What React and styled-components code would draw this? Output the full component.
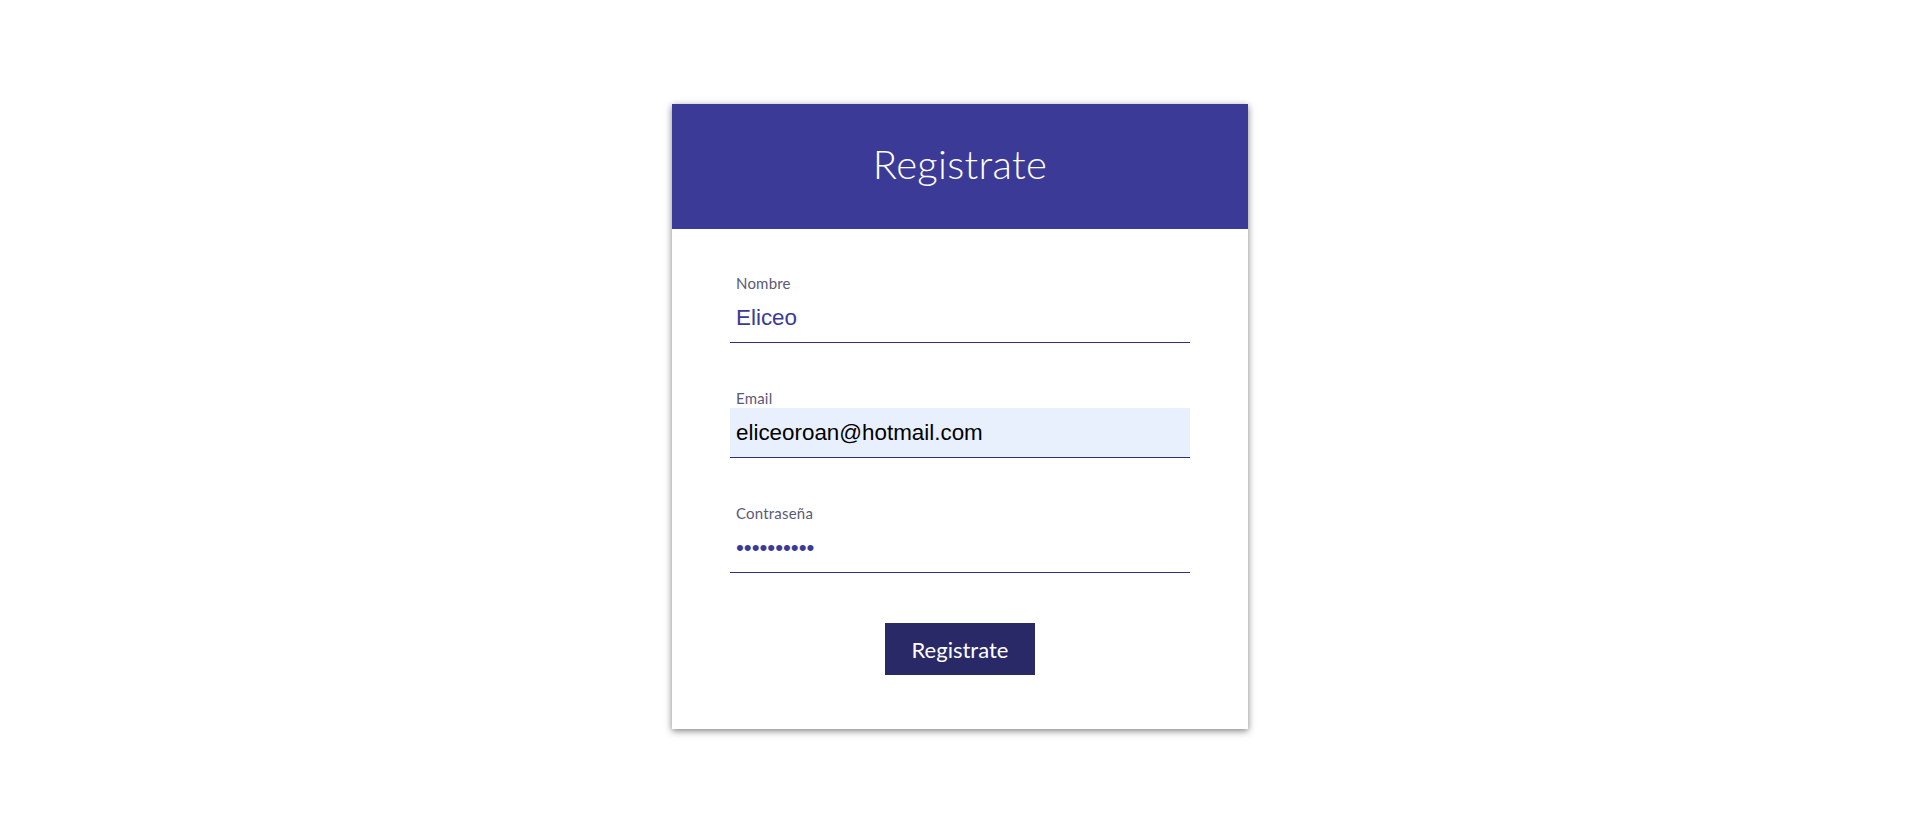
import styled, { createGlobalStyle } from 'styled-components';

const GlobalStyle = createGlobalStyle`
    body {
        margin: 0;
        background: #fff;
        font-family: Lato, "Open Sans", sans-serif;
    }
`;

const Page = styled.main`
    display: flex;
    justify-content: center;
    align-items: flex-start;
    box-sizing: border-box;
    min-height: 100vh;
    padding: 104px 0 40px;
`;

const Card = styled.section`
    width: 576px;
    background: #fff;
    box-shadow: 0 2px 7px rgba(0, 0, 0, 0.5);
`;

const CardHeader = styled.header`
    height: 125px;
    box-sizing: border-box;
    padding-bottom: 5px;
    background: #3b3b97;
    display: flex;
    align-items: center;
    justify-content: center;
`;

const CardTitle = styled.h1`
    margin: 0;
    color: #fff;
    font-family: Lato, sans-serif;
    font-weight: 300;
    font-size: 40px;
    letter-spacing: 0.3px;
`;

const Form = styled.form`
    display: flex;
    flex-direction: column;
    padding: 45px 58px 54px;
`;

const Field = styled.div`
    display: flex;
    flex-direction: column;
    margin-bottom: 46px;

    &:last-of-type {
        margin-bottom: 50px;
    }
`;

const Label = styled.label`
    padding-left: 6px;
    margin-bottom: 1px;
    color: #5a5a76;
    font-family: Lato, sans-serif;
    font-weight: 400;
    font-size: 15px;
    letter-spacing: 0.2px;
    line-height: 18px;
`;

const Input = styled.input`
    height: 50px;
    box-sizing: border-box;
    padding: 0 6px;
    border: none;
    border-bottom: 1px solid #2f2f88;
    outline: none;
    background: ${p => (p.$autofill ? '#e8f0fe' : 'transparent')};
    color: ${p => (p.$autofill ? '#000' : '#3b3b97')};
    font-family: "Liberation Sans", Arial, sans-serif;
    font-size: 22.4px;
`;

const SubmitButton = styled.button`
    align-self: center;
    width: 150px;
    height: 52px;
    border: none;
    background: #2a2968;
    color: #fff;
    font-family: Lato, sans-serif;
    font-weight: 400;
    font-size: 22px;
    cursor: pointer;
`;

const App = () => (
    <Page>
        <GlobalStyle />
        <Card>
            <CardHeader>
                <CardTitle>Registrate</CardTitle>
            </CardHeader>
            <Form onSubmit={e => e.preventDefault()}>
                <Field>
                    <Label htmlFor="nombre">Nombre</Label>
                    <Input id="nombre" type="text" defaultValue="Eliceo" />
                </Field>
                <Field>
                    <Label htmlFor="email">Email</Label>
                    <Input id="email" type="email" $autofill defaultValue="eliceoroan@hotmail.com" />
                </Field>
                <Field>
                    <Label htmlFor="pass">Contraseña</Label>
                    <Input id="pass" type="password" defaultValue="0123456789" />
                </Field>
                <SubmitButton type="submit">Registrate</SubmitButton>
            </Form>
        </Card>
    </Page>
);

export default App;
